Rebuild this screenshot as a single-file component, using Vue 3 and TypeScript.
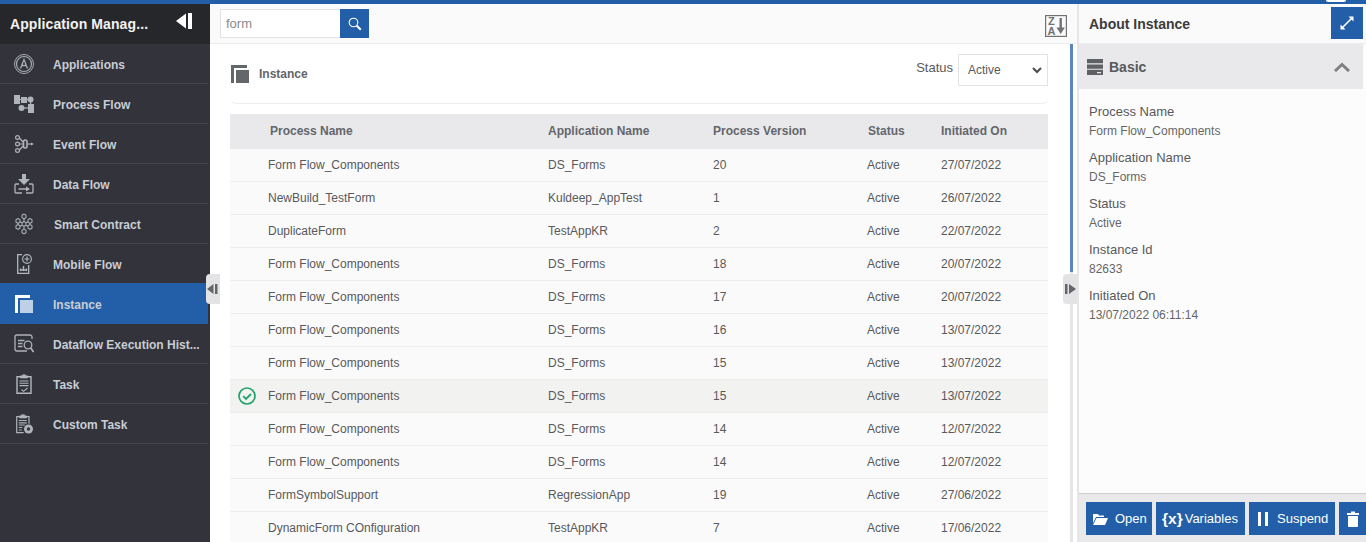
<script setup lang="ts">
interface Row { name: string; app: string; ver: string; date: string; selected?: boolean }
const rows: Row[] = [
  { name: 'Form Flow_Components', app: 'DS_Forms', ver: '20', date: '27/07/2022' },
  { name: 'NewBuild_TestForm', app: 'Kuldeep_AppTest', ver: '1', date: '26/07/2022' },
  { name: 'DuplicateForm', app: 'TestAppKR', ver: '2', date: '22/07/2022' },
  { name: 'Form Flow_Components', app: 'DS_Forms', ver: '18', date: '20/07/2022' },
  { name: 'Form Flow_Components', app: 'DS_Forms', ver: '17', date: '20/07/2022' },
  { name: 'Form Flow_Components', app: 'DS_Forms', ver: '16', date: '13/07/2022' },
  { name: 'Form Flow_Components', app: 'DS_Forms', ver: '15', date: '13/07/2022' },
  { name: 'Form Flow_Components', app: 'DS_Forms', ver: '15', date: '13/07/2022', selected: true },
  { name: 'Form Flow_Components', app: 'DS_Forms', ver: '14', date: '12/07/2022' },
  { name: 'Form Flow_Components', app: 'DS_Forms', ver: '14', date: '12/07/2022' },
  { name: 'FormSymbolSupport', app: 'RegressionApp', ver: '19', date: '27/06/2022' },
  { name: 'DynamicForm COnfiguration', app: 'TestAppKR', ver: '7', date: '17/06/2022' }
]
const nav = ['Applications', 'Process Flow', 'Event Flow', 'Data Flow', 'Smart Contract', 'Mobile Flow', 'Instance', 'Dataflow Execution Hist...', 'Task', 'Custom Task']
const details = [
  ['Process Name', 'Form Flow_Components'],
  ['Application Name', 'DS_Forms'],
  ['Status', 'Active'],
  ['Instance Id', '82633'],
  ['Initiated On', '13/07/2022 06:11:14']
]
</script>

<template>
  <div class="page">
    <div class="topbar"><span class="avatar"></span></div>
    <div class="body">
      <aside class="side">
        <div class="side-head">
          <span class="side-title">Application Manag...</span>
          <svg width="16" height="16" viewBox="0 0 16 16"><path d="M0 8 10 .5v15z" fill="#fff"/><rect x="12" y="0" width="4" height="16" fill="#fff"/></svg>
        </div>
        <ul class="nav">
          <li v-for="(n, i) in nav" :key="n" class="nav-item" :class="{ active: n === 'Instance' }">
            <span class="nav-icon">
              <svg v-if="i === 0" width="20" height="20" viewBox="0 0 20 20" fill="none" stroke="#a9acb2"><circle cx="10" cy="10" r="9.500"/><circle cx="10" cy="10" r="7.500" stroke-width="1.200"/><path d="M6.500 14.500 10 5.500l3.500 9M7.800 11.500h4.400" stroke-width="1.300"/></svg>
              <svg v-else-if="i === 1" width="20" height="18" viewBox="0 0 20 18" fill="#b0b3b8"><rect x="0" y="0" width="6" height="9"/><rect x="7" y="2" width="6" height="6"/><circle cx="16.500" cy="4.500" r="3"/><rect x="5" y="4" width="10" height="1"/><rect x="16" y="4.500" width="1.200" height="6"/><circle cx="7.500" cy="13" r="3"/><rect x="7.500" y="12.400" width="7" height="1.200"/><rect x="14" y="9" width="6" height="9"/></svg>
              <svg v-else-if="i === 2" width="19" height="18" viewBox="0 0 19 18" fill="none" stroke="#b0b3b8" stroke-width="1.200"><circle cx="2.500" cy="2.500" r="1.900"/><circle cx="2.500" cy="9" r="1.900"/><circle cx="2.500" cy="15.500" r="1.900"/><path d="M4.500 3l3.500 4M4.500 9H8M4.500 15l3.500-4"/><rect x="8.500" y="5" width="3.500" height="8" rx="1.700" stroke-width="1.600"/><path d="M12.500 9h3.500"/><path d="M16 7.500 19 9l-3 1.500z" fill="#b0b3b8" stroke="none"/></svg>
              <svg v-else-if="i === 3" width="20" height="20" viewBox="0 0 20 20" fill="none" stroke="#b0b3b8" stroke-width="1.300"><path d="M8 0h4v5h4l-6 6-6-6h4z" fill="#b0b3b8" stroke="none"/><path d="M5 10H2a1.300 1.300 0 0 0-1 1v7a1 1 0 0 0 1 1h6M15 10h3a1.300 1.300 0 0 1 1 1v7a1 1 0 0 1-1 1h-6"/><path d="M4.500 15H13" stroke-width="1.500"/><path d="M12 12.500 16 15l-4 2.500z" fill="#b0b3b8" stroke="none"/></svg>
              <svg v-else-if="i === 4" width="18" height="22" viewBox="0 0 18 22" fill="none" stroke="#a9acb2" stroke-width="1.100"><path d="m9 1 2 1.200v2.400L9 5.800 7 4.600V2.200z"/><path d="m3 5.500 2 1.200v2.400l-2 1.200-2-1.200V6.700z"/><path d="m15 5.500 2 1.200v2.400l-2 1.200-2-1.200V6.700z"/><path d="m9 8.500 2 1.200v2.400l-2 1.200-2-1.200V9.700z"/><path d="m3 11.500 2 1.200v2.400l-2 1.200-2-1.200v-2.400z"/><path d="m15 11.500 2 1.200v2.400l-2 1.200-2-1.200v-2.400z"/><path d="m9 16 2 1.200v2.400L9 20.800l-2-1.200v-2.400zM9 5.800v2.700M5 8.500l2 1.200M13 8.500l-2 1.200M5 13.500l2-1.200M13 13.500l-2-1.200M9 13.300V16M3 10.300v1.200M15 10.300v1.200"/></svg>
              <svg v-else-if="i === 5" width="15" height="20" viewBox="0 0 15 20" fill="none" stroke="#b4b7bd" stroke-width="1.300"><path d="M5 .7H.7v18.600h11V11"/><circle cx="10" cy="5" r="4.400" stroke-width="1.100"/><path d="M10 2.500v5M7.500 5h5" stroke-width="1.100"/><path d="M3 16h7M3.500 14.500V17M6.500 12v5M9.500 14.500V17" stroke-width="1.400"/></svg>
              <svg v-else-if="i === 6" width="18" height="18" viewBox="0 0 18 18"><path d="M0 0h15v3H3v15H0z" fill="#fff"/><rect x="5" y="5" width="13" height="13" fill="#bdd0e6"/></svg>
              <svg v-else-if="i === 7" width="20" height="19" viewBox="0 0 20 19" fill="none" stroke="#b0b3b8" stroke-width="1.300"><path d="M18 5V3a2 2 0 0 0-2-2H3a2 2 0 0 0-2 2v12a2 2 0 0 0 2 2h10"/><path d="M4 6.500h6.500M4 9.500h4.500M4 12.500h4.500"/><circle cx="14" cy="11" r="3.800"/><path d="m16.800 14 2.700 4" stroke-width="1.700"/></svg>
              <svg v-else-if="i === 8" width="16" height="20" viewBox="0 0 16 20" fill="none" stroke="#b4b7bd" stroke-width="1.400"><path d="M5 2.700H1v16.600h14V2.700h-4"/><path d="M4.500 4V1.800h2.200V.7h2.600v1.100h2.200V4z" fill="#b4b7bd" stroke-width=".6"/><path d="M3.500 7h9M3.500 9.300h9M3.500 11.600h9M5.500 15.500l2 1.800 4-3.300" stroke-width="1.100"/></svg>
              <svg v-else width="17" height="20" viewBox="0 0 17 20" fill="none" stroke="#b0b3b8" stroke-width="1.200"><path d="M4 2.700H.7v16h7M10 2.700h3v7"/><path d="M3.500 4V1.800h2V.7h3v1.100h2V4z" fill="#b0b3b8" stroke-width=".6"/><path d="M2.800 6.500h8M2.800 8.800h8M2.800 11h6M2.800 13.500h3.500M2.800 16h3"/><circle cx="12.500" cy="15" r="4.500" fill="#b0b3b8" stroke="none"/><circle cx="12.500" cy="15" r="1.700" fill="#32333b" stroke="none"/></svg>
            </span>
            <span class="nav-label">{{ n }}</span>
          </li>
        </ul>
        <div class="tab tab-left">
          <svg width="12" height="10" viewBox="0 0 12 10"><path d="M0 5 6.500 0v10z" fill="#63666b"/><rect x="8" y="0" width="2.500" height="10" fill="#63666b"/></svg>
        </div>
      </aside>

      <main class="main">
        <div class="toolbar">
          <div class="search">
            <span class="search-input">form</span>
            <span class="search-btn">
              <svg width="14" height="14" viewBox="0 0 14 14" fill="none" stroke="#fff"><circle cx="5.500" cy="5.500" r="4.300" stroke-width="1.100"/><path d="m8.800 8.800 4 4" stroke-width="2"/></svg>
            </span>
          </div>
          <svg class="sort" width="22" height="22" viewBox="0 0 22 22"><rect x=".6" y=".6" width="20.800" height="20.800" fill="none" stroke="#707276" stroke-width="1.200"/><text x="3" y="10" class="sort-t">Z</text><text x="2.500" y="19.500" class="sort-t">A</text><path d="M14.500 3h2.400v9.500h3l-4.200 6.500-4.200-6.500h3z" fill="#707276"/></svg>
        </div>
        <div class="content">
          <div class="scroll">
            <div class="scroll-thumb"></div>
          </div>
          <div class="inst-head">
            <div class="inst-title">
              <svg width="18" height="18" viewBox="0 0 18 18"><path d="M0 0h16v3H3v15H0z" fill="#63666b"/><rect x="5" y="5" width="13" height="13" fill="#63666b"/></svg>
              <span>Instance</span>
            </div>
            <div class="status-filter">
              <span>Status</span>
              <div class="select">
                <span>Active</span>
                <svg width="10" height="7" viewBox="0 0 10 7" fill="none" stroke="#4c4c4c" stroke-width="2"><path d="m1 1 4 4 4-4"/></svg>
              </div>
            </div>
          </div>
          <div class="table">
            <div class="tr th">
              <div class="c1 hpad">Process Name</div>
              <div class="c2">Application Name</div>
              <div class="c3">Process Version</div>
              <div class="c4">Status</div>
              <div class="c5">Initiated On</div>
            </div>
            <div v-for="(r, i) in rows" :key="i" class="tr td" :class="{ sel: r.selected }">
              <svg v-if="r.selected" class="check" width="18" height="18" viewBox="0 0 18 18" fill="none" stroke="#1fa36b"><circle cx="9" cy="9" r="8" stroke-width="1.700"/><path d="m5.200 9.200 2.800 2.800 5-5" stroke-width="1.800"/></svg>
              <div class="c1">{{ r.name }}</div>
              <div class="c2">{{ r.app }}</div>
              <div class="c3">{{ r.ver }}</div>
              <div class="c4">Active</div>
              <div class="c5">{{ r.date }}</div>
            </div>
          </div>
        </div>
        <div class="tab tab-right">
          <svg width="12" height="10" viewBox="0 0 12 10"><rect x="1" y="0" width="2.500" height="10" fill="#63666b"/><path d="M12 5 5 0v10z" fill="#63666b"/></svg>
        </div>
      </main>

      <section class="panel">
        <div class="panel-head">
          <span>About Instance</span>
          <span class="expand">
            <svg width="16" height="16" viewBox="0 0 16 16" fill="none" stroke="#fff" stroke-width="1.600"><path d="M3.500 12.500l9-9"/><path d="M9.500 1.500h5v5z" fill="#fff" stroke="none"/><path d="M6.500 14.500h-5v-5z" fill="#fff" stroke="none"/></svg>
          </span>
        </div>
        <div class="acc">
          <div class="acc-title">
            <svg width="16" height="16" viewBox="0 0 16 16"><path d="M0 0h16v4.300H0zM0 5.400h16v4.300H0zM0 10.800h16V16H0z" fill="#5f6165"/><rect x="10" y="13" width="4" height="1.300" fill="#e9e9ec"/></svg>
            <span>Basic</span>
          </div>
          <svg width="18" height="10" viewBox="0 0 18 10" fill="none" stroke="#808080" stroke-width="3"><path d="m2 9 7-6.500L16 9"/></svg>
        </div>
        <div class="details">
          <div v-for="d in details" :key="d[0]" class="detail">
            <div class="d-label">{{ d[0] }}</div>
            <div class="d-value">{{ d[1] }}</div>
          </div>
        </div>
        <div class="actions">
          <button class="btn b-open">
            <svg width="15" height="12" viewBox="0 0 15 12"><path d="M0 1h5l1 1.500h5V4H3L0 10z" fill="#fff"/><path d="M3.500 5H15l-3 7H0z" fill="#fff"/></svg>
            <span>Open</span>
          </button>
          <button class="btn b-vars"><b class="fx">{x}</b><span>Variables</span></button>
          <button class="btn b-susp">
            <svg width="10" height="14" viewBox="0 0 10 14"><rect width="3" height="14" fill="#fff"/><rect x="7" width="3" height="14" fill="#fff"/></svg>
            <span>Suspend</span>
          </button>
          <button class="btn b-del">
            <svg width="12" height="16" viewBox="0 0 12 16"><path d="M0 2h4V.5h4V2h4v2H0zM1 5h10v10a1 1 0 0 1-1 1H2a1 1 0 0 1-1-1z" fill="#fff"/></svg>
          </button>
        </div>
      </section>
    </div>
  </div>
</template>

<style>
html, body { margin: 0; overflow: hidden; }
</style>

<style scoped>
.page { width: 1366px; height: 542px; display: flex; flex-direction: column; overflow: hidden; font-family: "Liberation Sans", Arial, sans-serif; color: #58595b; font-size: 12px; background: #fff; }
.topbar { height: 4px; flex: none; background: #235fa8; position: relative; }
.avatar { position: absolute; left: 1326px; top: 0; width: 20px; height: 2px; background: #fff; border-radius: 0 0 10px 10px; }
.body { flex: 1; display: flex; min-height: 0; }

.side { width: 210px; flex: none; background: #32333b; position: relative; }
.side-head { height: 40px; background: #26272b; display: flex; align-items: center; justify-content: space-between; padding: 0 18px 0 10px; box-sizing: border-box; color: #fff; }
.side-head svg { margin-top: -6px; }
.side-title { font-size: 14px; font-weight: 700; color: #f2f2f2; letter-spacing: .1px; }
.nav { list-style: none; margin: 0; padding: 0; width: 208px; }
.nav-item { height: 40px; box-sizing: border-box; border-bottom: 1px solid #45464c; display: flex; align-items: center; color: #c8cdd4; font-weight: 700; }
.nav-item.active { background: #235fa8; border-bottom-color: #235fa8; box-shadow: 0 -1px 0 #235fa8; }
.nav-item:nth-child(5) .nav-label { margin-left: 20px; }
.nav-icon { width: 20px; margin-left: 14px; flex: none; display: flex; justify-content: center; }
.nav-label { white-space: nowrap; margin-left: 19px; padding-top: 2px; }
.tab { position: absolute; width: 14px; height: 30px; background: #e3e3e5; display: flex; align-items: center; justify-content: center; border-radius: 4px 0 0 4px; }
.tab-left { left: 206px; top: 270px; }
.tab-right { left: 853px; top: 270px; }

.main { flex: 1; min-width: 0; position: relative; display: flex; flex-direction: column; }
.toolbar { height: 40px; flex: none; box-sizing: border-box; background: #fafafa; border-bottom: 1px solid #ededed; display: flex; align-items: flex-start; justify-content: space-between; padding: 5px 10px 0 10px; }
.search { display: flex; height: 29px; }
.search-input { width: 120px; height: 29px; box-sizing: border-box; border: 1px solid #e3e3e3; border-right: 0; background: #fff; color: #8a8a8a; font-size: 13px; padding: 0 5px; line-height: 27px; }
.search-btn { width: 29px; background: #235fa8; display: flex; align-items: center; justify-content: center; }
.sort { margin-top: 6px; }
.sort-t { font: 700 11px "Liberation Sans", sans-serif; fill: #707276; }
.content { flex: 1; position: relative; padding: 0 29px 0 20px; overflow: hidden; }
.scroll { position: absolute; right: 4px; top: 0; bottom: 0; width: 3px; background: #e6e6e6; }
.scroll-thumb { width: 3px; height: 228px; background: #5b86bf; }
.inst-head { height: 60px; box-sizing: border-box; border-bottom: 1px solid #ededed; display: flex; justify-content: space-between; padding-top: 10px; margin-bottom: 10px; border-radius: 0 0 6px 6px; }
.inst-title { display: flex; align-items: center; gap: 10px; height: 40px; padding-left: 1px; font-weight: 700; color: #63666b; }
.status-filter { display: flex; gap: 5px; font-size: 13px; height: 32px; }
.status-filter > span { line-height: 28px; color: #58595b; padding-left: 1px; margin-left: 0; }
.select { width: 90px; height: 32px; box-sizing: border-box; border: 1px solid #e3e3e3; padding: 0 5px 0 9px; font-size: 12px; display: flex; justify-content: space-between; align-items: center; background: #fff; }
.tr { display: flex; align-items: center; position: relative; }
.th { height: 35px; box-sizing: border-box; padding-bottom: 2px; background: #e9e9ec; font-weight: 700; color: #63666b; }
.td { height: 33px; box-sizing: border-box; background: #fafafa; border-bottom: 1px solid #ededed; }
.td.sel { background: #f2f2f0; }
.check { position: absolute; left: 8px; top: 7px; }
.c1 { width: 318px; padding-left: 38px; box-sizing: border-box; }
.hpad { padding-left: 40px; }
.c2 { width: 165px; }
.c3 { width: 154px; }
.c4 { width: 74px; }
.th .c4 { padding-left: 1px; width: 73px; }
.c5 { flex: 1; }

.panel { width: 289px; flex: none; box-sizing: border-box; border-left: 2px solid #e6e6e6; display: flex; flex-direction: column; background: #fcfcfc; }
.panel-head { height: 40px; flex: none; box-sizing: border-box; display: flex; justify-content: space-between; align-items: flex-start; padding: 0 3px 0 10px; background: #fafafa; border-bottom: 1px solid #ededed; font-size: 14px; font-weight: 700; color: #3c3c3c; line-height: 40px; }
.expand { width: 32px; height: 32px; margin-top: 3px; background: #235fa8; display: flex; align-items: center; justify-content: center; }
.acc { height: 45px; flex: none; margin-right: 3px; background: #e9e9ec; display: flex; justify-content: space-between; align-items: center; padding: 0 12px 0 8px; }
.acc-title { display: flex; align-items: center; gap: 6px; font-size: 14px; font-weight: 700; color: #58595b; }
.details { flex: 1; padding: 15px 10px 0; }
.detail { height: 46px; }
.d-label { font-size: 13px; line-height: 16px; color: #58595b; }
.d-value { font-size: 12px; line-height: 18px; margin-top: 2px; color: #666; }
.actions { height: 49px; flex: none; box-sizing: border-box; background: #e9e9ec; border-top: 1px solid #ccc; padding: 8px 0 0 7px; display: flex; gap: 4px; }
.btn { height: 33px; border: 0; background: #235fa8; color: #fff; font: 13px "Liberation Sans", sans-serif; display: flex; align-items: center; box-sizing: border-box; }
.b-open { width: 66px; gap: 7px; padding: 0 0 0 7px; }
.b-vars { width: 89px; gap: 2px; padding: 0 0 0 6px; }
.b-susp { width: 86px; gap: 9px; padding: 0 0 0 9px; }
.b-del { width: 27px; padding: 0 0 0 8px; }
.fx { font-size: 15.500px; }
</style>
